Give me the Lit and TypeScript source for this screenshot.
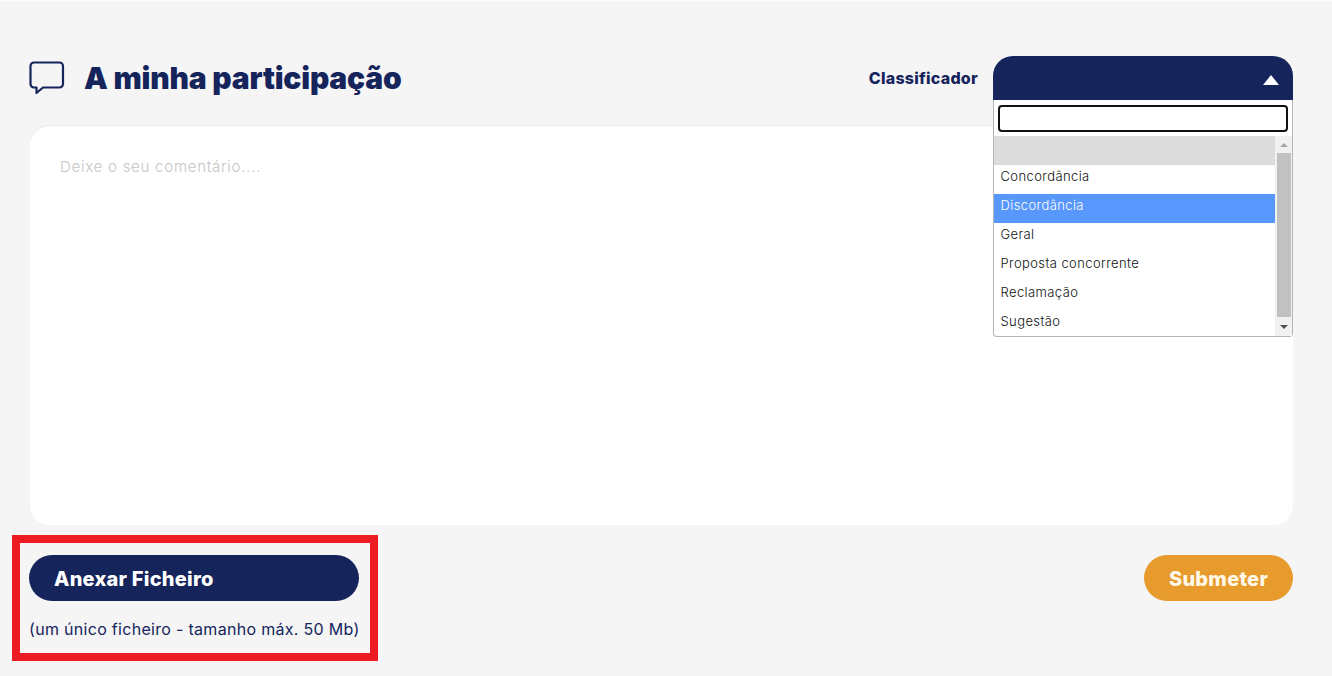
import { LitElement, html, css } from "lit";
import { customElement } from "lit/decorators.js";

const options = ["", "Concordância", "Discordância", "Geral", "Proposta concorrente", "Reclamação", "Sugestão"];

@customElement("app-root")
export class AppRoot extends LitElement {
  static styles = css`
    :host { display: block; width: 1332px; height: 676px; background: #f5f5f6; color: #16245c; font-family: "Inter", "Liberation Sans", sans-serif; overflow: hidden; position: relative; box-sizing: border-box; border-top: 1px solid #fcfcfc; }
    *, *::before { box-sizing: border-box; }
    .wrap { display: flex; flex-direction: column; padding: 55px 39px 0 29px; }
    .head { display: flex; justify-content: space-between; height: 70px; }
    .title { display: flex; align-items: center; height: 44px; gap: 19px; }
    .title svg { display: block; margin-top: -1px; }
    h1 { margin: 0; font-size: 30px; font-weight: 900; line-height: 44px; margin-top: -1px; letter-spacing: -0.2px; }
    .cls { display: flex; gap: 15px; align-items: flex-start; }
    .cls-label { font-size: 16px; font-weight: 800; line-height: 45px; letter-spacing: 0.25px; }
    .select { width: 300px; position: relative; height: 44px; }
    .select-head { height: 44px; background: #16245c; border-radius: 20px 20px 0 0; display: flex; align-items: center; justify-content: flex-end; padding: 4px 14px 0 0; }
    .arrow { width: 0; height: 0; border-left: 8px solid transparent; border-right: 8px solid transparent; border-bottom: 10px solid #fff; }
    .panel { position: absolute; top: 44px; left: 0; width: 300px; height: 237px; background: #fff; border: 1px solid #b4b4b4; border-top: 0; border-radius: 0 0 4px 4px; z-index: 2; display: flex; flex-direction: column; }
    .search { height: 36px; padding: 5px 4px 4px; }
    .search div { height: 27px; border: 2px solid #111; border-radius: 4px; background: #fff; }
    .body { display: flex; flex: 1; min-height: 0; }
    .list { flex: 1; margin: 0; padding: 0; list-style: none; font-size: 13px; font-weight: 300; color: #111; }
    .list li { height: 29px; line-height: 22px; padding-left: 6.5px; letter-spacing: 0.4px; }
    .list li.blank { background: #dcdcdc; }
    .list li.active { background: #5897fb; color: #fff; }
    .scroll { width: 17px; background: #f1f1f1; display: flex; flex-direction: column; align-items: center; }
    .scroll .up, .scroll .down { height: 17px; width: 100%; display: flex; align-items: center; justify-content: center; }
    .scroll .down { height: 19px; }
    .tri-up { border-left: 4px solid transparent; border-right: 4px solid transparent; border-bottom: 4px solid #a6a6a6; }
    .tri-down { border-left: 4px solid transparent; border-right: 4px solid transparent; border-top: 4px solid #505050; }
    .thumb { flex: 1; width: 14px; background: #c1c1c1; }
    .card { height: 399px; margin-left: 1px; background: #fff; border-radius: 20px; padding: 31px 30px; font-weight: 300; font-size: 15px; line-height: 20px; color: #c4c4c4; letter-spacing: 0.75px; box-shadow: 0 -1px 0 #ececec; }
    .foot { display: flex; justify-content: space-between; align-items: flex-start; margin-top: 30px; }
    .attach-box { width: 330px; display: flex; flex-direction: column; position: relative; }
    .attach-box::before { content: ""; position: absolute; left: -17px; top: -20px; width: 366px; height: 126px; border: 8px solid #ed1c24; pointer-events: none; }
    .btn { height: 46px; border-radius: 23px; color: #fff; font-size: 20px; font-weight: 800; display: flex; align-items: center; letter-spacing: 0.25px; padding-top: 1px; }
    .attach { background: #16245c; padding-left: 25px; width: 330px; }
    .note { margin-top: 18px; font-size: 16px; line-height: 20px; font-weight: 400; color: #16245c; white-space: nowrap; letter-spacing: 0.3px; }
    .submit { background: #e69b2c; width: 149px; justify-content: center; color: #fff8e8; }
  `;

  render() {
    return html`
      <div class="wrap">
        <div class="head">
          <div class="title">
            <svg width="36" height="34" viewBox="0 0 36 34" fill="none" stroke="#16245c" stroke-width="2.2" stroke-linejoin="round">
              <path d="M5 1.5H30.500A3.500 3.500 0 0 1 34 5V23A3.500 3.500 0 0 1 30.500 26.500H14L7.500 32V26.500H5A3.500 3.500 0 0 1 1.500 23V5A3.500 3.500 0 0 1 5 1.500Z" />
            </svg>
            <h1>A minha participação</h1>
          </div>
          <div class="cls">
            <span class="cls-label">Classificador</span>
            <div class="select">
              <div class="select-head"><span class="arrow"></span></div>
              <div class="panel">
                <div class="search"><div></div></div>
                <div class="body">
                  <ul class="list">
                    ${options.map(
                      (o, i) => html`<li class="${i === 0 ? "blank" : i === 2 ? "active" : ""}">${o}</li>`
                    )}
                  </ul>
                  <div class="scroll">
                    <div class="up"><span class="tri-up"></span></div>
                    <div class="thumb"></div>
                    <div class="down"><span class="tri-down"></span></div>
                  </div>
                </div>
              </div>
            </div>
          </div>
        </div>
        <div class="card">Deixe o seu comentário....</div>
        <div class="foot">
          <div class="attach-box">
            <div class="btn attach">Anexar Ficheiro</div>
            <div class="note">(um único ficheiro - tamanho máx. 50 Mb)</div>
          </div>
          <div class="btn submit">Submeter</div>
        </div>
      </div>
    `;
  }
}
